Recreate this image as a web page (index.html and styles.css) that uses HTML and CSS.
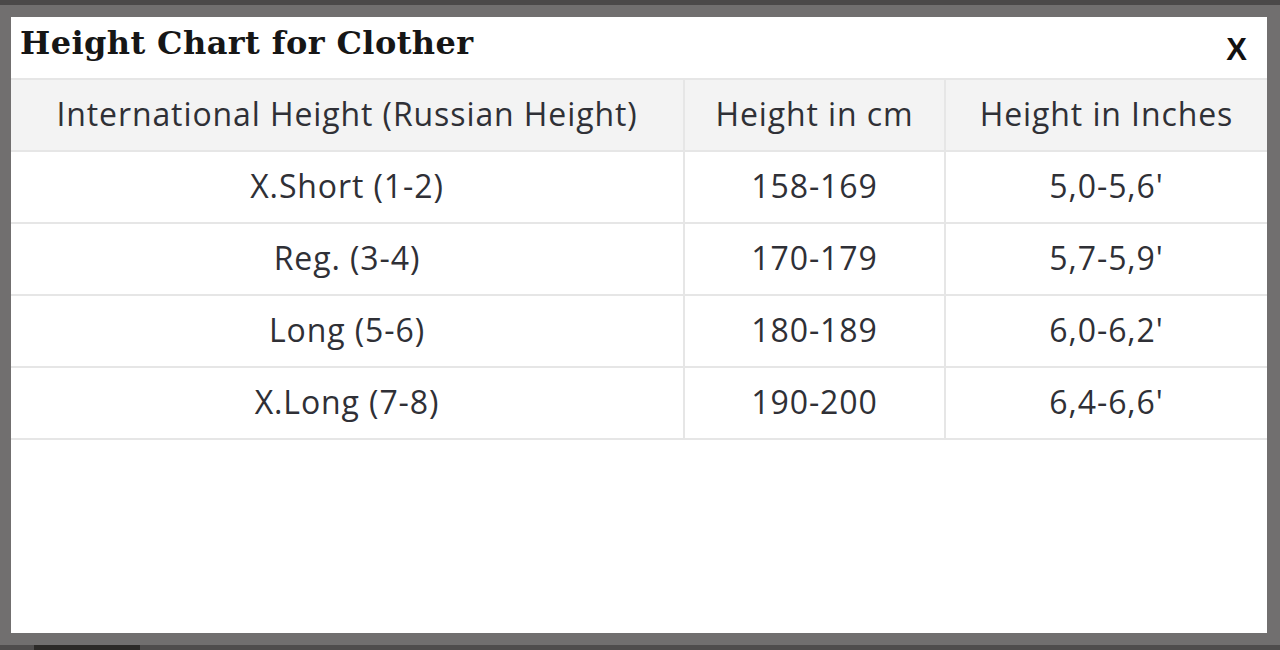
FILE: index.html
```html
<!DOCTYPE html>
<html>
<head>
<meta charset="utf-8">
<link rel="stylesheet" href="styles.css">
</head>
<body>
<div class="backdrop">
  <div class="topbar"></div>
  <div class="frame">
    <div class="modal">
      <div class="modal-head">
        <h2 class="title">Height Chart for Clother</h2>
        <span class="close">X</span>
      </div>
      <table class="chart">
        <thead>
          <tr><th class="c1">International Height (Russian Height)</th><th class="c2">Height in cm</th><th class="c3">Height in Inches</th></tr>
        </thead>
        <tbody>
          <tr><td>X.Short (1-2)</td><td>158-169</td><td>5,0-5,6'</td></tr>
          <tr><td>Reg. (3-4)</td><td>170-179</td><td>5,7-5,9'</td></tr>
          <tr><td>Long (5-6)</td><td>180-189</td><td>6,0-6,2'</td></tr>
          <tr><td>X.Long (7-8)</td><td>190-200</td><td>6,4-6,6'</td></tr>
        </tbody>
      </table>
    </div>
  </div>
  <div class="bottombar"><span class="tab"></span></div>
</div>
</body>
</html>
```
FILE: styles.css
```css
html, body {
  margin: 0;
  padding: 0;
  background: #6f6d6d;
}
.backdrop {
  width: 1280px;
  height: 650px;
  display: flex;
  flex-direction: column;
  background: #716f6f;
}
.topbar {
  height: 5px;
  background: #4b4949;
}
.frame {
  padding: 12px 13px 0 11px;
}
.modal {
  background: #ffffff;
  height: 616px;
  display: flex;
  flex-direction: column;
}
.modal-head {
  height: 61px;
  display: flex;
  align-items: flex-start;
  justify-content: space-between;
  padding: 0 20px 0 9px;
}
.title {
  margin: 7px 0 0;
  font-family: "DejaVu Serif", "Liberation Serif", serif;
  font-weight: bold;
  font-size: 32px;
  letter-spacing: 0.4px;
  line-height: 1.2;
  color: #161616;
}
.close {
  margin-top: 17px;
  font-family: "Liberation Sans", Arial, sans-serif;
  font-weight: bold;
  font-size: 31px;
  line-height: 1;
  color: #111;
}
.chart {
  width: 100%;
  border-collapse: collapse;
  font-family: "Open Sans", "Noto Sans", sans-serif;
  font-size: 32px;
  letter-spacing: 0.9px;
  color: #2f3036;
  text-align: center;
}
.chart th, .chart td {
  height: 66px;
  padding: 0 0 4px;
  border: 2px solid #e6e6e6;
  font-weight: normal;
}
.chart tr > :first-child { border-left: none; }
.chart tr > :last-child { border-right: none; }
.chart thead th {
  background: #f3f3f3;
}
.c1 { width: 672px; }
.c2 { width: 259px; }
.bottombar {
  margin-top: auto;
  height: 5px;
  background: #4f4d4d;
  display: flex;
}
.tab {
  margin-left: 34px;
  width: 106px;
  background: #2c2a28;
}
```
